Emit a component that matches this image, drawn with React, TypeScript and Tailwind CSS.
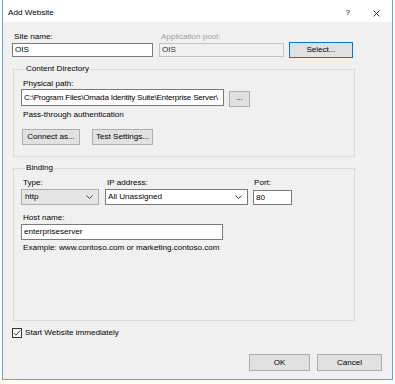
const font = "font-['Liberation_Sans',Arial,sans-serif]";

function Chevron() {
  return (
    <svg width="7" height="4" viewBox="0 0 7 4" className="shrink-0">
      <path d="M0.5 0.5 L3.5 3.5 L6.5 0.5" fill="none" stroke="#404040" strokeWidth="1" />
    </svg>
  );
}

function Button({ label, className }: { label: string; className: string }) {
  return (
    <div
      className={`flex items-center justify-center bg-[#e1e1e1] border border-[#adadad] text-black ${className}`}
    >
      {label}
    </div>
  );
}

export default function App() {
  return (
    <div className={`w-[395px] h-[384px] bg-white pl-[2px] text-[8.1px] leading-[10px] text-black ${font}`}>
      <div className="w-[391px] h-[380px] flex flex-col border-x border-b border-[#5aa5e6]">
        {/* Title bar */}
        <div className="h-[22px] bg-white flex items-start pt-[8px] pl-[5px] pr-[12px]">
          <span className="flex-1">Add Website</span>
          <span className="mr-[23px]">?</span>
          <svg width="7" height="7" viewBox="0 0 7 7" className="mt-[2px]">
            <path d="M0.5 0.5 L6.5 6.5 M6.5 0.5 L0.5 6.5" stroke="#202020" strokeWidth="0.9" />
          </svg>
        </div>

        {/* Body */}
        <div className="flex-1 bg-[#f0f0f0] pt-[10px] pl-[9px] pr-[10px] flex flex-col">
          {/* Site name / App pool */}
          <div className="flex items-start">
            <div className="w-[141px] flex flex-col">
              <span className="pl-[2px]">Site name:</span>
              <div className="mt-[1px] h-[14px] bg-white border border-[#7a7a7a] pl-[2px] flex items-center">OIS</div>
            </div>
            <div className="ml-[6px] w-[125px] flex flex-col">
              <span className="pl-[2px] text-[#a0a0a0]">Application pool:</span>
              <div className="mt-[1px] h-[14px] bg-[#f0f0f0] border border-[#c4c4c4] pl-[2px] flex items-center text-[#303030]">OIS</div>
            </div>
            <Button label="Select..." className="ml-[5px] mt-[10px] w-[64px] h-[16px] !border-[#0078d7]" />
          </div>

          {/* Content Directory */}
          <fieldset className="mt-[6px] ml-[1px] w-[342px] border border-[#dcdcdc] pl-[7px] pb-[11px]">
            <legend className="ml-[4px] px-[1px]">Content Directory</legend>
            <span className="block mt-[5px] pl-[2px]">Physical path:</span>
            <div className="flex items-start">
              <div className="w-[203px] h-[17px] bg-white border border-[#7a7a7a] pl-[2px] flex items-center overflow-hidden whitespace-nowrap tracking-[-0.22px]">
                C:\Program Files\Omada Identity Suite\Enterprise Server\
              </div>
              <Button label="..." className="ml-[5px] mt-[2px] w-[21px] h-[16px] pb-[3px]" />
            </div>
            <span className="block mt-[3px] pl-[2px]">Pass-through authentication</span>
            <div className="flex mt-[9px] ml-[1px] gap-[12px]">
              <Button label="Connect as..." className="w-[58px] h-[16px]" />
              <Button label="Test Settings..." className="w-[61px] h-[16px]" />
            </div>
          </fieldset>

          {/* Binding */}
          <fieldset className="mt-[6px] ml-[1px] w-[342px] border border-[#dcdcdc] pl-[7px] pb-[67px]">
            <legend className="ml-[4px] px-[1px]">Binding</legend>
            <div className="flex items-start mt-[5px]">
              <div className="w-[78px] flex flex-col">
                <span className="pl-[2px]">Type:</span>
                <div className="mt-[1px] h-[16px] bg-[#e5e5e5] border border-[#acacac] pl-[3px] pr-[5px] flex items-center">
                  <span className="flex-1">http</span>
                  <Chevron />
                </div>
              </div>
              <div className="ml-[6px] w-[143px] flex flex-col">
                <span className="pl-[2px]">IP address:</span>
                <div className="mt-[1px] h-[16px] bg-white border border-[#7a7a7a] pl-[2px] pr-[5px] flex items-center">
                  <span className="flex-1">All Unassigned</span>
                  <Chevron />
                </div>
              </div>
              <div className="ml-[5px] w-[39px] flex flex-col">
                <span className="pl-[1px]">Port:</span>
                <div className="mt-[2px] h-[15px] bg-white border border-[#7a7a7a] pl-[2px] flex items-center">80</div>
              </div>
            </div>
            <span className="block mt-[8px] pl-[2px]">Host name:</span>
            <div className="mt-[1px] w-[202px] h-[16px] bg-white border border-[#7a7a7a] pl-[2px] flex items-center">
              enterpriseserver
            </div>
            <span className="block mt-[3px] pl-[2px]">Example: www.contoso.com or marketing.contoso.com</span>
          </fieldset>

          {/* Start immediately */}
          <div className="mt-[7px] flex items-center">
            <div className="w-[10px] h-[10px] bg-white border border-[#333333] flex items-center justify-center">
              <svg width="8" height="8" viewBox="0 0 8 8">
                <path d="M1 4.2 L3 6.2 L7 1.5" fill="none" stroke="#202020" strokeWidth="0.9" />
              </svg>
            </div>
            <span className="ml-[3px]">Start Website immediately</span>
          </div>

          {/* OK / Cancel */}
          <div className="mt-[16px] flex justify-end gap-[7px]">
            <Button label="OK" className="w-[61px] h-[17px]" />
            <Button label="Cancel" className="w-[65px] h-[17px]" />
          </div>
        </div>
      </div>
    </div>
  );
}
